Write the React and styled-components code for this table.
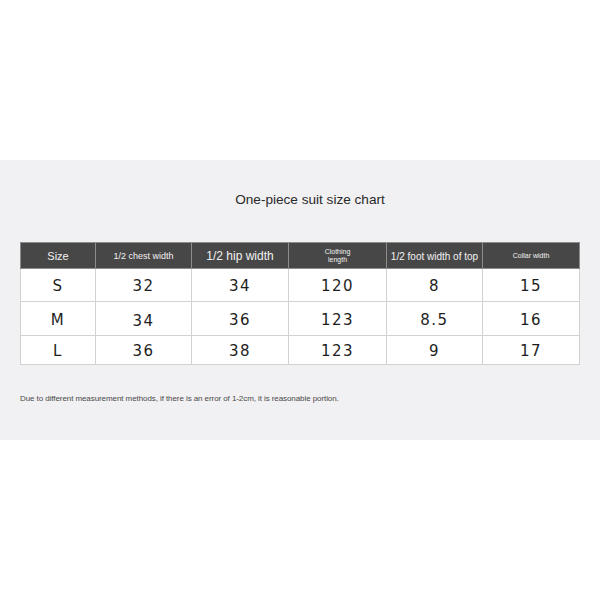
import styled, { createGlobalStyle } from "styled-components";

const GlobalStyle = createGlobalStyle`
  body {
    margin: 0;
    background: #ffffff;
    font-family: "Liberation Sans", Arial, sans-serif;
  }
`

const Panel = styled.section`
  margin-top: 160px;
  height: 280px;
  background: #f1f0f2;
  padding: 31px 20px 0 20px;
  box-sizing: border-box;
`

const Title = styled.div`
  text-align: center;
  font-size: 13.6px;
  line-height: 18px;
  color: #2a2a2a;
  padding-left: 20px;
  margin-bottom: 33px;
`

const Table = styled.table`
  border-collapse: collapse;
  width: 559px;
  table-layout: fixed;
`

const HeadCell = styled.th`
  background: #474747;
  color: #f2f2f2;
  border: 1px solid #8c8c8c;
  height: 24px;
  padding: 1px 0 0;
  font-weight: normal;
  font-size: ${p => p.$size || 10}px;
  line-height: ${p => (p.$size || 10) + 1}px;
`

const Row = styled.tr`
  height: ${p => p.$h}px;
  background: #ffffff;
`

const Cell = styled.td`
  border: 1px solid #d2d2d2;
  text-align: center;
  padding: ${p => (p.$low ? "5px 0 0" : "2px 0 0")};
  font-family: "DejaVu Sans", Verdana, sans-serif;
  font-size: 15px;
  letter-spacing: 1.5px;
  color: #1e1e1e;
`

const Note = styled.p`
  margin: 29px 0 0;
  font-size: 8px;
  letter-spacing: -0.08px;
  color: #4a4a4a;
`

const headers = [
  { label: "Size", size: 11, w: 75 },
  { label: "1/2 chest width", size: 9, w: 96 },
  { label: "1/2 hip width", size: 12, w: 97 },
  { label: <>Clothing<br />length</>, size: 7, w: 98 },
  { label: "1/2 foot width of top", size: 10, w: 96 },
  { label: "Collar width", size: 7, w: 97 },
];

const rows = [
  { h: 33, cells: ["S", "32", "34", "120", "8", "15"] },
  { h: 34, cells: ["M", "34", "36", "123", "8.5", "16"], low: [1] },
  { h: 29, cells: ["L", "36", "38", "123", "9", "17"] },
];

export default function App() {
  return (
    <>
      <GlobalStyle />
      <Panel>
        <Title>One-piece suit size chart</Title>
        <Table>
          <colgroup>
            {headers.map((h, i) => <col key={i} style={{ width: h.w }} />)}
          </colgroup>
          <thead>
            <tr>
              {headers.map((h, i) => (
                <HeadCell key={i} $size={h.size}>{h.label}</HeadCell>
              ))}
            </tr>
          </thead>
          <tbody>
            {rows.map((r, i) => (
              <Row key={i} $h={r.h}>
                {r.cells.map((c, j) => (
                  <Cell key={j} $low={r.low && r.low.includes(j)}>{c}</Cell>
                ))}
              </Row>
            ))}
          </tbody>
        </Table>
        <Note>Due to different measurement methods, if there is an error of 1-2cm, it is reasonable portion.</Note>
      </Panel>
    </>
  );
}
